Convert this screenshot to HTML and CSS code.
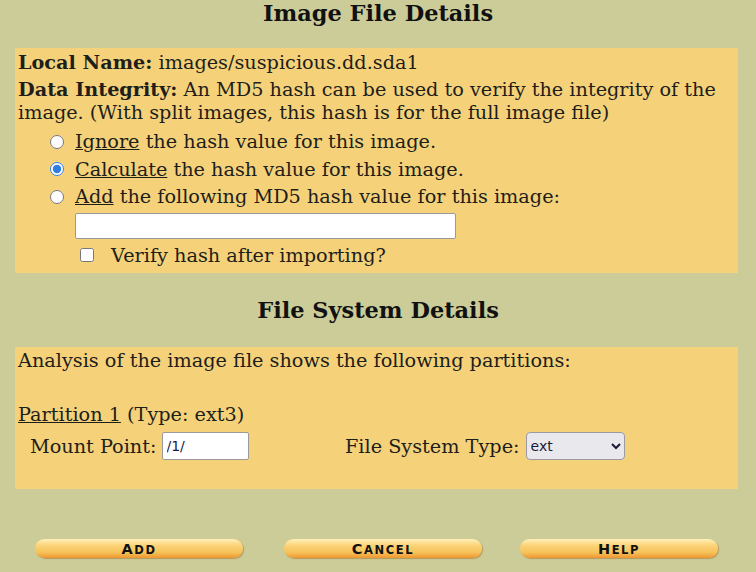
FILE: index.html
```html
<!DOCTYPE html>
<html>
<head>
<meta charset="utf-8">
<link rel="stylesheet" href="styles.css">
</head>
<body>
<h1 class="title title-image">Image File Details</h1>
<div class="panel panel-image">
  <div class="line line-local"><b>Local Name:</b> images/suspicious.dd.sda1</div>
  <div class="line line-integrity"><b>Data Integrity:</b> An MD5 hash can be used to verify the integrity of the image. (With split images, this hash is for the full image file)</div>
  <label class="opt"><input type="radio" name="md5" class="radio"><span><u>Ignore</u> the hash value for this image.</span></label>
  <label class="opt"><input type="radio" name="md5" class="radio" checked><span><u>Calculate</u> the hash value for this image.</span></label>
  <label class="opt"><input type="radio" name="md5" class="radio"><span><u>Add</u> the following MD5 hash value for this image:</span></label>
  <div class="hash-row"><input type="text" class="hash-input"></div>
  <label class="verify"><input type="checkbox" class="check"><span>Verify hash after importing?</span></label>
</div>

<h1 class="title title-fs">File System Details</h1>
<div class="panel panel-fs">
  <div class="line line-analysis">Analysis of the image file shows the following partitions:</div>
  <div class="line line-part"><u>Partition 1</u> (Type: ext3)</div>
  <div class="mount-row">
    <div class="mount"><span>Mount Point:</span><input type="text" class="mount-input" value="/1/"></div>
    <div class="fstype"><span>File System Type:</span><select class="fs-select"><option>ext</option></select></div>
  </div>
</div>

<div class="buttons">
  <div class="btn btn-add"><span class="cap">A</span>dd</div>
  <div class="btn btn-cancel"><span class="cap">C</span>ancel</div>
  <div class="btn btn-help"><span class="cap">H</span>elp</div>
</div>
</body>
</html>
```
FILE: styles.css
```css
html, body {
  margin: 0;
  padding: 0;
}
body {
  background: #cccc99;
  font-family: "DejaVu Serif", serif;
  font-size: 19.25px;
  color: #1e1e1a;
  width: 756px;
  height: 572px;
  overflow: hidden;
}
.title {
  margin: 0;
  text-align: center;
  font-size: 22.46px;
  font-weight: bold;
  color: #111;
}
.title-image {
  height: 48px;
  line-height: 26px;
}
.title-fs {
  height: 74px;
  line-height: 74px;
}
.panel {
  background: #f5d27a;
  margin: 0 18px 0 15px;
  padding: 0 3px;
}
.panel-image {
  height: 225px;
  box-sizing: border-box;
  padding-top: 3px;
}
.line {
  line-height: 23px;
}
.line-local {
  height: 27px;
  line-height: 24px;
}
.line-integrity {
  margin-bottom: 4px;
}
.opt {
  display: flex;
  align-items: center;
  height: 27.5px;
  padding-left: 32px;
}
.radio {
  width: 14px;
  height: 14px;
  margin: 0 11px 0 0;
  accent-color: #2f7de1;
}
.hash-row {
  padding-left: 57px;
  padding-top: 2px;
  height: 29px;
}
.hash-input {
  width: 381px;
  height: 26px;
  box-sizing: border-box;
  border: 1px solid #9a9a9a;
  border-radius: 2px;
  margin: 0;
}
.verify {
  display: flex;
  align-items: center;
  height: 27px;
  padding-left: 62px;
}
.check {
  width: 14px;
  height: 14px;
  margin: 0 17px 0 0;
}
.panel-fs {
  height: 142px;
  box-sizing: border-box;
  padding-top: 2px;
}
.line-analysis {
  height: 54px;
}
.line-part {
  height: 25px;
}
.mount-row {
  display: flex;
  align-items: center;
  height: 36px;
}
.mount {
  display: flex;
  align-items: center;
  padding-left: 12px;
  width: 315px;
}
.mount span, .fstype span {
  margin-right: 5px;
}
.mount-input {
  width: 87px;
  height: 28px;
  box-sizing: border-box;
  border: 1px solid #9a9a9a;
  border-radius: 2px;
  margin: 0;
  font-family: "DejaVu Sans", sans-serif;
  font-size: 14px;
  padding: 0 4px;
  color: #1a1a4a;
}
.fstype {
  display: flex;
  align-items: center;
}
.fs-select {
  width: 99px;
  height: 28px;
  font-family: "DejaVu Sans", sans-serif;
  font-size: 14px;
  margin: 0 0 0 1px;
  background-color: #e9e9ed;
  border: 1px solid #9a9aa2;
  border-radius: 4px;
  color: #1a1a3a;
}
.buttons {
  display: flex;
  align-items: center;
  padding-left: 35px;
  margin-top: 50px;
}
.btn {
  width: 208px;
  height: 19px;
  border-radius: 10px;
  background: linear-gradient(to bottom, #fff0b8 0%, #fbd276 35%, #f6c35a 70%, #ef9630 100%);
  box-shadow: 1px 1px 1px rgba(160, 110, 40, 0.55);
  text-align: center;
  font-family: "DejaVu Sans", sans-serif;
  font-weight: bold;
  text-transform: uppercase;
  font-size: 11.5px;
  line-height: 21px;
  letter-spacing: 1.6px;
  color: #111;
}
.cap {
  font-size: 14.5px;
}
.btn-cancel {
  margin-left: 41px;
  width: 198px;
}
.btn-help {
  margin-left: 38px;
  width: 198px;
}
```
